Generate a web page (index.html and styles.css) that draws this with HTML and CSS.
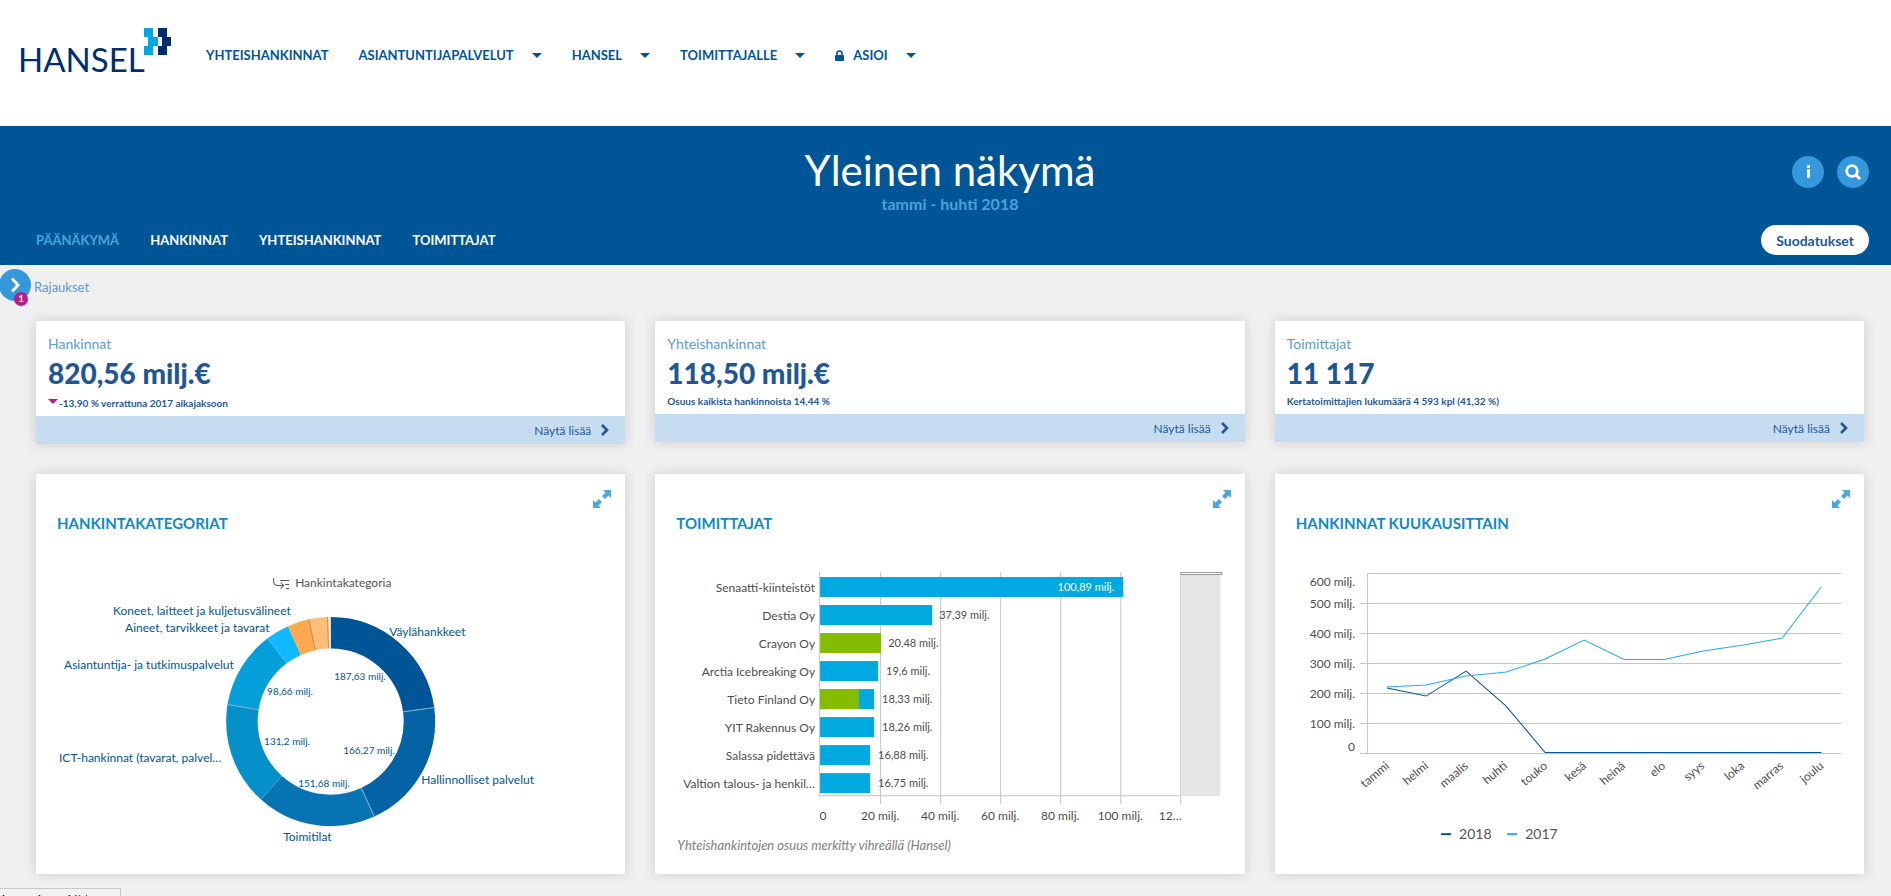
FILE: index.html
```html
<!DOCTYPE html>
<html lang="fi">
<head>
    <meta charset="UTF-8">
    <meta name="viewport" content="width=device-width, initial-scale=1.0">
    <title>Yleinen näkymä - Hansel</title>
    <link rel="stylesheet" href="styles.css">
</head>
<body>

<!-- Yläpalkki -->
<header class="site-header">
    <a class="logo" href="#" aria-label="Hansel">
        <svg width="154" height="54" viewBox="0 0 154 54">
            <text class="logo-text" x="0" y="45">HANSEL</text>
            <path fill="#00a9e0" d="M126 1h9v9h5v9h-5v9h-9v-9h4v-9h-4z"/>
            <path fill="#002d6e" d="M140 1h9v9h4v9h-4v9h-9v-9h4v-9h-4z"/>
        </svg>
    </a>
    <nav class="main-nav">
        <a href="#">YHTEISHANKINNAT</a>
        <a href="#">ASIANTUNTIJAPALVELUT <span class="caret"></span></a>
        <a href="#">HANSEL <span class="caret"></span></a>
        <a href="#">TOIMITTAJALLE <span class="caret"></span></a>
        <a href="#">
            <svg class="lock" width="9" height="11" viewBox="0 0 9 11">
                <path fill="none" stroke="currentColor" stroke-width="1.6" d="M2 6V3.5a2.5 2.5 0 0 1 5 0V6"/>
                <rect y="5" width="9" height="6" rx="1" fill="currentColor"/>
            </svg>ASIOI <span class="caret"></span></a>
    </nav>
</header>

<!-- Otsikko ja välilehdet -->
<section class="banner">
    <div class="banner-title">
        <h1>Yleinen näkymä</h1>
        <p>tammi - huhti 2018</p>
    </div>
    <div class="banner-icons">
        <button class="round" type="button" aria-label="Info">
            <svg width="16" height="16" viewBox="0 0 16 16"><path fill="#fff" d="M7 1h3v3H7zM7 5h3v9H7z"/></svg>
        </button>
        <button class="round" type="button" aria-label="Haku">
            <svg width="16" height="16" viewBox="0 0 16 16" fill="none" stroke="#fff" stroke-width="2.800">
                <circle cx="7" cy="7" r="5.300"/><path d="M10.500 10.500l4.700 4.700"/>
            </svg>
        </button>
    </div>
    <div class="banner-bottom">
        <nav class="tabs">
            <a class="active" href="#">PÄÄNÄKYMÄ</a>
            <a href="#">HANKINNAT</a>
            <a href="#">YHTEISHANKINNAT</a>
            <a href="#">TOIMITTAJAT</a>
        </nav>
        <button class="filter-button" type="button">Suodatukset</button>
    </div>
</section>

<!-- Rajaukset -->
<div class="filters">
    <button class="round" id="openFilters" type="button" aria-label="Avaa rajaukset">
        <svg width="16" height="16" viewBox="0 0 16 16" fill="none" stroke="#fff" stroke-width="3"><path d="M5 1.500l6 6.500-6 6.500"/></svg>
        <span class="badge">1</span>
    </button>
    <label for="openFilters">Rajaukset</label>
</div>

<main class="content">
    <!-- Tunnusluvut -->
    <div class="grid">
        <article class="card">
            <div class="kpi">
                <h2>Hankinnat</h2>
                <strong>820,56 milj.€</strong>
                <p class="trend"><span class="down"></span>-13,90 % verrattuna 2017 aikajaksoon</p>
            </div>
            <a class="more" href="#">Näytä lisää <svg width="8" height="12" viewBox="0 0 8 12" fill="none" stroke="#1f5796" stroke-width="2.600"><path d="M1 1l5 5-5 5"/></svg></a>
        </article>
        <article class="card">
            <div class="kpi">
                <h2>Yhteishankinnat</h2>
                <strong>118,50 milj.€</strong>
                <p>Osuus kaikista hankinnoista 14,44 %</p>
            </div>
            <a class="more" href="#">Näytä lisää <svg width="8" height="12" viewBox="0 0 8 12" fill="none" stroke="#1f5796" stroke-width="2.600"><path d="M1 1l5 5-5 5"/></svg></a>
        </article>
        <article class="card">
            <div class="kpi">
                <h2>Toimittajat</h2>
                <strong>11 117</strong>
                <p>Kertatoimittajien lukumäärä 4 593 kpl (41,32 %)</p>
            </div>
            <a class="more" href="#">Näytä lisää <svg width="8" height="12" viewBox="0 0 8 12" fill="none" stroke="#1f5796" stroke-width="2.600"><path d="M1 1l5 5-5 5"/></svg></a>
        </article>
    </div>

    <!-- Kaaviot -->
    <div class="grid charts">
        <section class="card chart">
            <button class="expand" type="button" aria-label="Suurenna">
                <svg width="18" height="18" viewBox="0 0 18 18" fill="#4ba7de"><path d="M10 0h8v8l-2.500-2.500-3.500 3.500-3-3 3.500-3.500zM0 18v-8l2.500 2.500 3.500-3.500 3 3-3.500 3.500L8 18z"/></svg>
            </button>
            <h3>HANKINTAKATEGORIAT</h3>
            <svg class="plot" viewBox="0 0 589 330">
                <path class="drill" d="M237.500 34v3q0 4.500 5 4.500h4M244.500 38.500l3 3-3 3M244 36.500h9M249 40.500h4M250 44.500h3"/>
                <text x="259" y="43" class="dimension">Hankintakategoria</text>

                <g class="donut" transform="rotate(-90 294.500 177.500)">
                    <circle cx="294.500" cy="177.500" r="88.750" pathLength="360" stroke="#005596" stroke-dasharray="82.300 360"/>
                    <circle cx="294.500" cy="177.500" r="88.750" pathLength="360" stroke="#0463a5" stroke-dasharray="73 360" stroke-dashoffset="-82.300"/>
                    <circle cx="294.500" cy="177.500" r="88.750" pathLength="360" stroke="#0873b3" stroke-dasharray="66.500 360" stroke-dashoffset="-155.300"/>
                    <circle cx="294.500" cy="177.500" r="88.750" pathLength="360" stroke="#0690ca" stroke-dasharray="57.600 360" stroke-dashoffset="-221.800"/>
                    <circle cx="294.500" cy="177.500" r="88.750" pathLength="360" stroke="#049fda" stroke-dasharray="43.300 360" stroke-dashoffset="-279.400"/>
                    <circle cx="294.500" cy="177.500" r="88.750" pathLength="360" stroke="#11b9ff" stroke-dasharray="13.200 360" stroke-dashoffset="-322.700"/>
                    <circle cx="294.500" cy="177.500" r="88.750" pathLength="360" stroke="#ffa94f" stroke-dasharray="12 360" stroke-dashoffset="-335.900"/>
                    <circle cx="294.500" cy="177.500" r="88.750" pathLength="360" stroke="#ffbd77" stroke-dasharray="10.400 360" stroke-dashoffset="-347.900"/>
                    <circle cx="294.500" cy="177.500" r="88.750" pathLength="360" stroke="#fbe3b8" stroke-dasharray="1.700 360" stroke-dashoffset="-358.300"/>
                </g>
                <g stroke="#7fb0d4">
                    <path d="M294.500 73v31.500" transform="rotate(82.300 294.500 177.500)"/>
                    <path d="M294.500 73v31.500" transform="rotate(155.300 294.500 177.500)"/>
                    <path d="M294.500 73v31.500" transform="rotate(279.400 294.500 177.500)"/>
                </g>
                <g stroke="#b98b5c">
                    <path d="M294.500 73v31.500" transform="rotate(347.900 294.500 177.500)"/>
                    <path d="M294.500 73v31.500" transform="rotate(358.300 294.500 177.500)"/>
                </g>

                <g class="slice-label">
                    <text x="353" y="92">Väylähankkeet</text>
                    <text x="385" y="240">Hallinnolliset palvelut</text>
                    <text x="247" y="297">Toimitilat</text>
                    <text x="23" y="218">ICT-hankinnat (tavarat, palvel…</text>
                    <text x="28" y="125">Asiantuntija- ja tutkimuspalvelut</text>
                    <text x="89" y="88">Aineet, tarvikkeet ja tavarat</text>
                    <text x="77" y="71">Koneet, laitteet ja kuljetusvälineet</text>
                </g>
                <g class="slice-value">
                    <text x="298" y="136">187,63 milj.</text>
                    <text x="307" y="210">166,27 milj.</text>
                    <text x="262" y="243">151,68 milj.</text>
                    <text x="228" y="201">131,2 milj.</text>
                    <text x="231" y="151">98,66 milj.</text>
                </g>
            </svg>
        </section>

        <section class="card chart">
            <button class="expand" type="button" aria-label="Suurenna">
                <svg width="18" height="18" viewBox="0 0 18 18" fill="#4ba7de"><path d="M10 0h8v8l-2.500-2.500-3.500 3.500-3-3 3.500-3.500zM0 18v-8l2.500 2.500 3.500-3.500 3 3-3.500 3.500L8 18z"/></svg>
            </button>
            <h3>TOIMITTAJAT</h3>
            <svg class="plot" viewBox="0 0 589 290">
                <path class="gridline" d="M225.500 28v232M285.500 28v232M345.500 28v232M405.500 28v232M465.500 28v232M525.500 28v232M164.500 28v223.500h361"/>
                <rect x="526" y="31" width="39" height="221" fill="#e5e5e5"/>
                <rect x="525.500" y="28.500" width="41" height="2" fill="#fff" stroke="#999"/>
                <g fill="#00a9e0">
                    <rect x="165" y="33" width="303" height="20"/>
                    <rect x="165" y="61" width="112" height="20"/>
                    <rect x="165" y="89" width="61" height="20" fill="#84bd00"/>
                    <rect x="165" y="117" width="58" height="20"/>
                    <rect x="165" y="145" width="54" height="20"/>
                    <rect x="165" y="145" width="39" height="20" fill="#84bd00"/>
                    <rect x="165" y="173" width="54" height="20"/>
                    <rect x="165" y="201" width="50" height="20"/>
                    <rect x="165" y="229" width="50" height="20"/>
                </g>
                <g class="axis" text-anchor="end">
                    <text x="160" y="48">Senaatti-kiinteistöt</text>
                    <text x="160" y="76">Destia Oy</text>
                    <text x="160" y="104">Crayon Oy</text>
                    <text x="160" y="132">Arctia Icebreaking Oy</text>
                    <text x="160" y="160">Tieto Finland Oy</text>
                    <text x="160" y="188">YIT Rakennus Oy</text>
                    <text x="160" y="216">Salassa pidettävä</text>
                    <text x="160" y="244">Valtion talous- ja henkil…</text>
                </g>
                <g class="axis bar-value">
                    <text class="inside" x="459" y="47" text-anchor="end">100,89 milj.</text>
                    <text x="284" y="75">37,39 milj.</text>
                    <text x="233" y="103">20,48 milj.</text>
                    <text x="231" y="131">19,6 milj.</text>
                    <text x="227" y="159">18,33 milj.</text>
                    <text x="227" y="187">18,26 milj.</text>
                    <text x="223" y="215">16,88 milj.</text>
                    <text x="223" y="243">16,75 milj.</text>
                </g>
                <g class="axis" text-anchor="middle">
                    <text x="168" y="276">0</text>
                    <text x="225" y="276">20 milj.</text>
                    <text x="285" y="276">40 milj.</text>
                    <text x="345" y="276">60 milj.</text>
                    <text x="405" y="276">80 milj.</text>
                    <text x="465" y="276">100 milj.</text>
                    <text x="515" y="276">12…</text>
                </g>
            </svg>
            <p class="note">Yhteishankintojen osuus merkitty vihreällä (Hansel)</p>
        </section>

        <section class="card chart">
            <button class="expand" type="button" aria-label="Suurenna">
                <svg width="18" height="18" viewBox="0 0 18 18" fill="#4ba7de"><path d="M10 0h8v8l-2.500-2.500-3.500 3.500-3-3 3.500-3.500zM0 18v-8l2.500 2.500 3.500-3.500 3 3-3.500 3.500L8 18z"/></svg>
            </button>
            <h3>HANKINNAT KUUKAUSITTAIN</h3>
            <svg class="plot" viewBox="0 0 589 330">
                <path class="gridline" d="M92 29.500h474M85 59.500h481M85 89.500h481M85 119.500h481M85 149.500h481M85 179.500h481M85 209.500h481M92.500 29v180"/>
                <polyline class="line" stroke="#005596" points="112,144 151,152 191,127 231,162 270,208.500 546,208.500"/>
                <polyline class="line" stroke="#2ba9e9" points="112,143 151,141 191,132 231,128 270,115 309,96 349,115.500 389,115.500 428,107 468,101 507,94 546,43"/>
                <g class="axis" text-anchor="end">
                    <text x="80" y="42">600 milj.</text>
                    <text x="80" y="64">500 milj.</text>
                    <text x="80" y="94">400 milj.</text>
                    <text x="80" y="124">300 milj.</text>
                    <text x="80" y="154">200 milj.</text>
                    <text x="80" y="184">100 milj.</text>
                    <text x="80" y="207">0</text>
                </g>
                <g class="axis" text-anchor="end">
                    <text transform="translate(115 223) rotate(-40)">tammi</text>
                    <text transform="translate(154 223) rotate(-40)">helmi</text>
                    <text transform="translate(194 223) rotate(-40)">maalis</text>
                    <text transform="translate(233 223) rotate(-40)">huhti</text>
                    <text transform="translate(273 223) rotate(-40)">touko</text>
                    <text transform="translate(312 223) rotate(-40)">kesä</text>
                    <text transform="translate(351 223) rotate(-40)">heinä</text>
                    <text transform="translate(391 223) rotate(-40)">elo</text>
                    <text transform="translate(430 223) rotate(-40)">syys</text>
                    <text transform="translate(470 223) rotate(-40)">loka</text>
                    <text transform="translate(509 223) rotate(-40)">marras</text>
                    <text transform="translate(549 223) rotate(-40)">joulu</text>
                </g>
                <g class="legend">
                    <rect x="166" y="289" width="10" height="2" fill="#005596"/>
                    <text x="184" y="295">2018</text>
                    <rect x="232" y="289" width="10" height="2" fill="#2ba9e9"/>
                    <text x="250" y="295">2017</text>
                </g>
            </svg>
        </section>
    </div>
</main>

<div class="status-bar">javascript:void('');</div>

</body>
</html>
```
FILE: styles.css
```css
* {
    box-sizing: border-box;
}

body {
    margin: 0;
    min-height: 100vh;
    overflow: hidden;
    font-family: Lato, "Liberation Sans", sans-serif;
    font-size: 13px;
    background-color: #f0f0f0;
    color: #1f5796;
}

a {
    color: inherit;
    text-decoration: none;
}

button {
    font-family: inherit;
    border: none;
    cursor: pointer;
}

h1, h2, h3, p {
    margin: 0;
}

/* Yläpalkki */
.site-header {
    display: flex;
    align-items: flex-start;
    height: 126px;
    padding: 27px 18px 0;
    background-color: #fff;
}

.logo svg {
    display: block;
    overflow: visible;
}

.logo-text {
    font-size: 33px;
    fill: #002d6e;
}

.main-nav {
    display: flex;
    gap: 30px;
    margin-left: 34px;
    padding-top: 18px;
    font-weight: 700;
    line-height: 20px;
    color: #005596;
}

.main-nav a {
    display: flex;
    align-items: center;
}

.caret {
    margin-left: 18px;
    border: 5px solid transparent;
    border-top-color: #005596;
    border-bottom: none;
}

.lock {
    margin-right: 9px;
}

/* Sininen otsikkoalue */
.banner {
    position: relative;
    padding: 21px 22px 10px 36px;
    background-color: #005596;
    color: #fff;
}

.banner-title {
    padding-right: 5px;
    text-align: center;
}

.banner h1 {
    font-size: 42px;
    font-weight: 400;
    line-height: 46px;
}

.banner p {
    font-size: 16px;
    font-weight: 700;
    line-height: 22px;
    color: #45a5dc;
}

.banner-icons {
    position: absolute;
    top: 30px;
    right: 22px;
    display: flex;
    gap: 13px;
}

.round {
    display: flex;
    justify-content: center;
    align-items: center;
    width: 32px;
    height: 32px;
    padding: 0;
    border-radius: 50%;
    background-color: #3598dc;
}

.banner-bottom {
    display: flex;
    justify-content: space-between;
    align-items: center;
    margin-top: 10px;
}

.tabs {
    display: flex;
    gap: 31px;
    font-weight: 700;
}

.tabs .active {
    color: #45a5dc;
}

.filter-button {
    height: 30px;
    padding: 0 15px;
    border-radius: 15px;
    background-color: #fff;
    color: #1f5796;
    font-size: 14px;
    font-weight: 700;
}

/* Rajaukset */
.filters {
    display: flex;
    align-items: center;
    gap: 3px;
    height: 56px;
    margin-left: -1px;
    padding-bottom: 16px;
    line-height: 20px;
    color: #5b9bd5;
}

.filters label {
    padding-top: 4px;
}

.filters .round {
    position: relative;
}

.badge {
    position: absolute;
    right: 3px;
    bottom: -5px;
    width: 14px;
    border-radius: 50%;
    background-color: #b81c86;
    color: #fff;
    font-size: 9px;
    font-weight: 700;
    line-height: 14px;
}

/* Kortit */
.content {
    padding: 0 27px 22px 36px;
}

.grid {
    display: grid;
    grid-template-columns: repeat(3, 1fr);
    gap: 30px;
    align-items: start;
}

.charts {
    align-items: stretch;
    margin-top: 30px;
}

.card {
    position: relative;
    background-color: #fff;
    box-shadow: 0 0 12px rgba(0, 0, 0, 0.15);
}

.kpi {
    padding: 13px 12px 4px;
}

.kpi h2 {
    font-size: 14px;
    font-weight: 400;
    line-height: 20px;
    color: #5b9bd5;
}

.kpi strong {
    display: block;
    font-size: 28px;
    font-weight: 900;
    line-height: 38px;
}

.kpi p {
    font-size: 10px;
    font-weight: 700;
    line-height: 18px;
}

.kpi .trend {
    padding-top: 2px;
}

.down {
    display: inline-block;
    margin-right: 1px;
    vertical-align: 3px;
    border: 5px solid transparent;
    border-top-color: #b81c86;
    border-bottom: none;
}

.more {
    display: flex;
    justify-content: flex-end;
    align-items: center;
    gap: 10px;
    height: 28px;
    padding-right: 16px;
    background-color: #c6ddf1;
    font-size: 12px;
}

/* Kaaviot */
.chart h3 {
    padding: 39px 21px 11px;
    font-size: 15px;
    font-weight: 700;
    line-height: 20px;
    color: #1089c4;
}

.expand {
    position: absolute;
    top: 16px;
    right: 14px;
    padding: 0;
    background: none;
}

.expand svg, .plot {
    display: block;
}

.plot {
    width: 100%;
}

.plot text {
    font-size: 12px;
}

.axis {
    fill: #4d4d4d;
}

.plot .bar-value text {
    font-size: 11px;
}

.plot .inside {
    fill: #fff;
}

.dimension {
    fill: #555;
}

.drill {
    fill: none;
    stroke: #555;
}

.donut circle {
    fill: none;
    stroke-width: 31.500;
}

.slice-label, .slice-value {
    fill: #005596;
}

.plot .slice-value text {
    font-size: 10px;
}

.gridline {
    fill: none;
    stroke: #c4c4c4;
}

.line {
    fill: none;
}

.plot .legend text {
    font-size: 14px;
    fill: #555;
}

.note {
    padding: 1px 22px 0;
    font-size: 13px;
    font-style: italic;
    line-height: 20px;
    color: #808080;
}

/* Selaimen tilarivi, jatkuu ikkunan alareunan yli */
.status-bar {
    position: fixed;
    bottom: -14px;
    left: 0;
    width: 121px;
    height: 22px;
    padding: 3px 2px;
    border: 1px solid #c8c8c8;
    border-left: none;
    background-color: #f2f2f2;
    color: #000;
    font-size: 12px;
    line-height: 16px;
}
```
